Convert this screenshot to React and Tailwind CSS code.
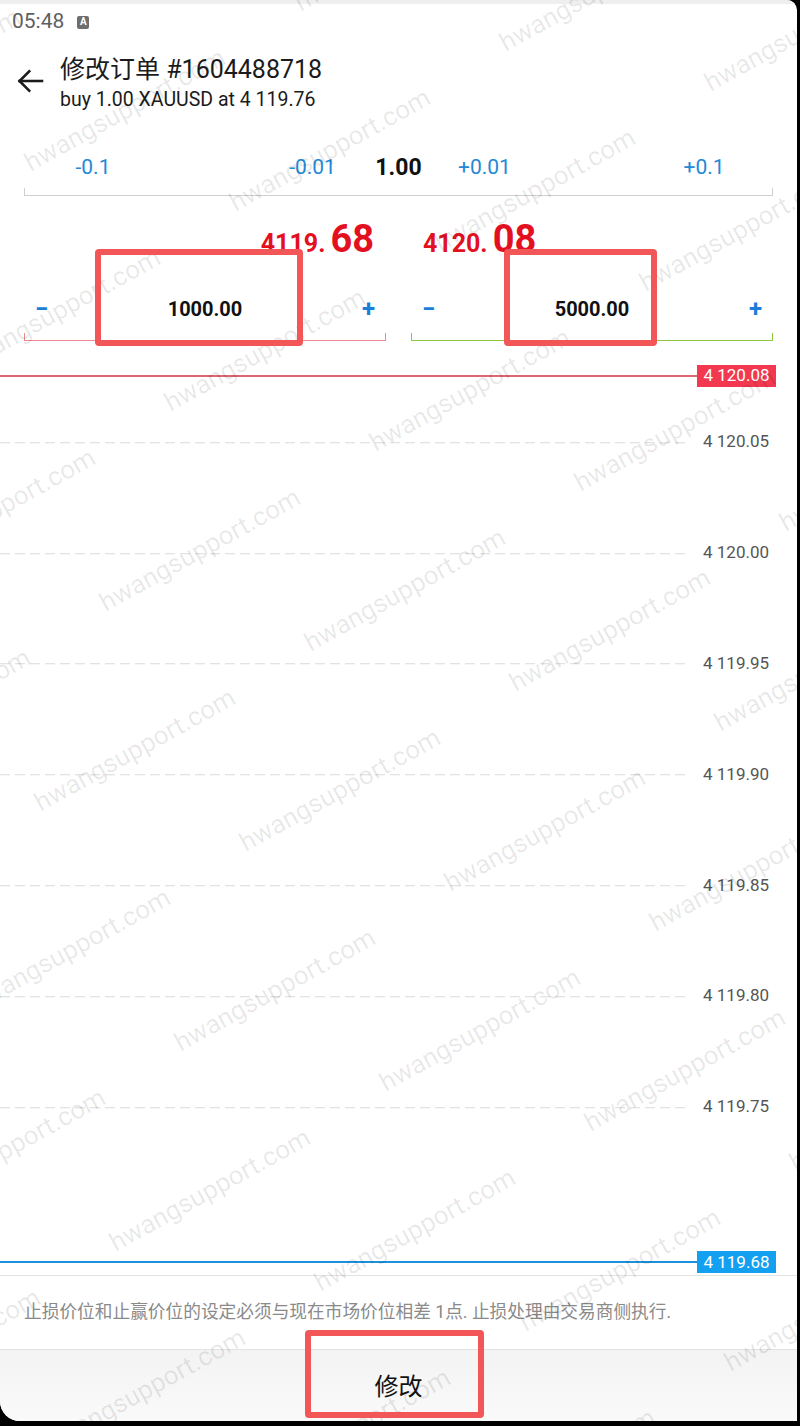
import React from 'react';

const FONT = "font-[Roboto,'Noto_Sans_CJK_SC',sans-serif]";

// chart scale: 1 cent = 22.16px, 4120.08 sits 24px below the chart top
const priceY = (p) => 24 + ((4120.08 - p) / 0.01) * 22.16;

const gridPrices = [4120.05, 4120.0, 4119.95, 4119.9, 4119.85, 4119.8, 4119.75];

const fmt = (p) => {
  const [i, d] = p.toFixed(2).split('.');
  return `${i[0]} ${i.slice(1)}.${d}`;
};

function Watermark() {
  const marks = [];
  for (let i = -4; i <= 6; i++) {
    for (let j = -3; j <= 8; j++) {
      const x = 265 + i * 205 - j * 65;
      const y = 350 + i * 40 + j * 200;
      if (x < -160 || x > 960 || y < -120 || y > 1560) continue;
      marks.push(
        <span
          key={`${i}-${j}`}
          className="absolute -translate-x-1/2 -translate-y-1/2 rotate-[-29deg] whitespace-nowrap text-[26px] text-black/[0.09]"
          style={{ left: x, top: y }}
        >
          hwangsupport.com
        </span>
      );
    }
  }
  return <div className="pointer-events-none absolute inset-0 overflow-hidden">{marks}</div>;
}

function Bracket({ color }) {
  return <div className={`h-[8px] border-x border-b ${color}`} />;
}

function LevelField({ value, lineColor }) {
  return (
    <div>
      <div className="flex h-[48px] items-center justify-between px-[11px]">
        <span className="w-[14px] text-[24px] font-bold leading-none text-[#1a7fd8]">−</span>
        <span className="text-[20px] font-bold text-[#111]">{value}</span>
        <span className="w-[14px] text-right text-[24px] font-bold leading-none text-[#1a7fd8]">+</span>
      </div>
      <Bracket color={lineColor} />
    </div>
  );
}

function Price({ head, tail, align }) {
  return (
    <div className={`flex h-[38px] items-baseline font-bold text-[#e3101f] ${align}`}>
      <span className="text-[25px] leading-none">{head}</span>
      <span className="ml-[5px] text-[38px] leading-none">{tail}</span>
    </div>
  );
}

function PriceLine({ price, line, badge }) {
  return (
    <div
      className="absolute left-0 flex w-[797px] -translate-y-1/2 items-center"
      style={{ top: priceY(price) }}
    >
      <div className={`h-[2px] w-[697px] ${line}`} />
      <div className={`flex h-[22px] w-[79px] items-center justify-center text-[17px] text-white ${badge}`}>
        {fmt(price)}
      </div>
    </div>
  );
}

function Chart() {
  return (
    <div className="relative mt-[11px] h-[924px] border-b border-[#e2e2e2]">
      {gridPrices.map((p) => (
        <div
          key={p}
          className="absolute left-0 flex w-[797px] -translate-y-1/2 items-center"
          style={{ top: priceY(p) }}
        >
          <div className="h-px w-[690px] bg-[repeating-linear-gradient(to_right,#dadada_0_10px,transparent_10px_15px)]" />
          <span className="ml-[13px] text-[17px] text-[#555]">{fmt(p)}</span>
        </div>
      ))}
      <PriceLine price={4120.08} line="bg-[#dc6672]" badge="bg-[#f2394f]" />
      <PriceLine price={4119.68} line="bg-[#1e90dc]" badge="bg-[#14a0f0]" />
    </div>
  );
}

export default function App() {
  return (
    <div className={`relative h-[1426px] w-[800px] overflow-hidden bg-black ${FONT}`}>
      <div className="flex h-[1421px] w-[797px] flex-col overflow-hidden rounded-bl-[20px] rounded-tr-[10px] bg-white">
        {/* status bar */}
        <div className="h-[4px] bg-[#efefef]" />
        <div className="flex h-[36px] items-center gap-[13px] pl-[12px]">
          <span className="text-[21px] text-[#5f5f5f]">05:48</span>
          <span className="flex h-[13px] w-[12px] items-center justify-center rounded-[2px] bg-[#6e6e6e] text-[10px] font-bold leading-none text-white">
            A
          </span>
        </div>

        {/* header */}
        <div className="flex h-[76px] items-start">
          <svg width="36" height="36" viewBox="0 0 24 24" className="ml-[12px] mt-[23px]" fill="none" stroke="#1b1b1b" strokeWidth="1.7" strokeLinecap="square">
            <path d="M20 12H5" />
            <path d="M11.5 5.5 5 12l6.5 6.5" />
          </svg>
          <div className="ml-[12px] pt-[15px] text-[#1b1b1b]">
            <div className="text-[25px] leading-[30px]">修改订单 #1604488718</div>
            <div className="mt-[3px] text-[19.5px] leading-[24px]">buy 1.00 XAUUSD at 4 119.76</div>
          </div>
        </div>

        {/* volume stepper */}
        <div className="px-[24px]">
          <div className="mt-[32px] flex h-[40px] items-center text-[21px] text-[#2389d6]">
            <span className="w-[138px] text-center">-0.1</span>
            <span className="flex-1" />
            <span className="w-[80px] text-center">-0.01</span>
            <span className="w-[92px] text-center text-[23px] font-bold text-[#111]">1.00</span>
            <span className="w-[80px] text-center">+0.01</span>
            <span className="flex-1" />
            <span className="w-[138px] text-center">+0.1</span>
          </div>
          <Bracket color="border-[#cfcfcf]" />
        </div>

        {/* stop loss / take profit */}
        <div className="mt-[24px] grid grid-cols-2 gap-x-[25px] px-[24px]">
          <div>
            <Price head="4119." tail="68" align="justify-end pr-[12px]" />
            <div className="mt-[27px]">
              <LevelField value="1000.00" lineColor="border-[#ec8a92]" />
            </div>
          </div>
          <div>
            <Price head="4120." tail="08" align="pl-[12px]" />
            <div className="mt-[27px]">
              <LevelField value="5000.00" lineColor="border-[#8cc63f]" />
            </div>
          </div>
        </div>

        <Chart />

        <div className="flex h-[74px] items-center border-b border-[#e2e2e2] px-[24px] text-[17.7px] text-[#8a8a8a]">
          止损价位和止赢价位的设定必须与现在市场价位相差 1点. 止损处理由交易商侧执行.
        </div>

        <div className="flex flex-1 items-center justify-center bg-gradient-to-b from-[#f3f3f3] to-[#fafafa]">
          <span className="mt-[3px] text-[24px] text-[#111]">修改</span>
        </div>
      </div>

      <Watermark />

      {/* highlight frames */}
      <div className="pointer-events-none absolute left-[95px] top-[249px] h-[97px] w-[208px] rounded-[4px] border-[6px] border-[#f25656]" />
      <div className="pointer-events-none absolute left-[504px] top-[249px] h-[97px] w-[153px] rounded-[4px] border-[6px] border-[#f25656]" />
      <div className="pointer-events-none absolute left-[305px] top-[1330px] h-[88px] w-[179px] rounded-[4px] border-[6px] border-[#f25656]" />
    </div>
  );
}
